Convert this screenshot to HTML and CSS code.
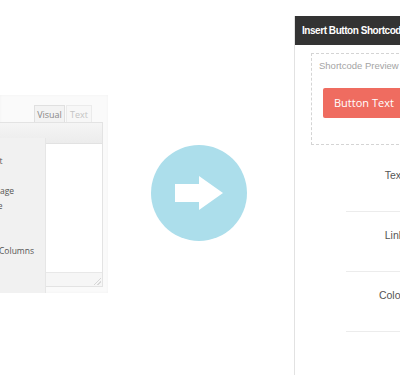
FILE: index.html
```html
<!DOCTYPE html>
<html lang="en">
<head>
    <meta charset="UTF-8">
    <meta name="viewport" content="width=device-width, initial-scale=1.0">
    <title>Button Shortcode</title>
    <link rel="stylesheet" href="styles.css">
</head>
<body>
    <div class="editor-wrap">
        <div class="tabs">
            <span class="tab active">Visual</span>
            <span class="tab">Text</span>
        </div>
        <div class="editor">
            <div class="toolbar"></div>
            <div class="content"></div>
            <div class="status"><span class="grip"></span></div>
        </div>
        <ul class="menu">
            <li>Tooltips Text</li>
            <li>&nbsp;</li>
            <li>Featured Image</li>
            <li>Pricing Table</li>
            <li>&nbsp;</li>
            <li>&nbsp;</li>
            <li>Responsive Columns</li>
        </ul>
    </div>

    <div class="arrow">
        <svg width="96" height="96" viewBox="0 0 96 96">
            <circle cx="48" cy="48" r="48" fill="#acdeeb"/>
            <rect x="24" y="39" width="25" height="18" fill="#fff"/>
            <polygon points="48,31 72,48 48,65" fill="#fff"/>
        </svg>
    </div>

    <div class="panel">
        <div class="panel-header">Insert Button Shortcode</div>
        <div class="panel-body">
            <div class="preview">
                <div class="preview-title">Shortcode Preview</div>
                <span class="btn-preview">Button Text</span>
            </div>
            <div class="fields">
                <div class="field"><label>Text</label></div>
                <div class="field"><label>Link</label></div>
                <div class="field"><label>Color</label></div>
            </div>
        </div>
    </div>
</body>
</html>
```

FILE: styles.css
```css
body {
    margin: 0;
    width: 400px;
    height: 375px;
    overflow: hidden;
    display: flex;
    align-items: flex-start;
    background: #fff;
    font-family: "Liberation Sans", Arial, sans-serif;
}

/* left: editor screenshot */
.editor-wrap {
    position: relative;
    flex-shrink: 0;
    width: 108px;
    height: 198px;
    margin-top: 95px;
    background: #fafafa;
    box-shadow: inset 0 0 3px rgba(0, 0, 0, 0.04);
    overflow: hidden;
}
.tabs {
    display: flex;
    gap: 1px;
    padding: 10px 0 0 34px;
    height: 17px;
}
.tab {
    width: 26px;
    height: 17px;
    line-height: 17px;
    text-align: center;
    font-family: "Open Sans", sans-serif;
    font-size: 9px;
    color: #c4c4c4;
    background: #f7f7f7;
    border: 1px solid #ebebeb;
    border-bottom: none;
    box-sizing: border-box;
}
.tab.active {
    width: 31px;
    color: #888;
    background: #f3f3f3;
    border-color: #e0e0e0;
}
.editor {
    display: flex;
    flex-direction: column;
    width: 104px;
    height: 165px;
    margin-left: -1px;
    border: 1px solid #e3e3e3;
    box-sizing: border-box;
    background: #fff;
}
.toolbar {
    height: 20px;
    background: linear-gradient(#f5f5f5, #ececec);
    border-bottom: 1px solid #e2e2e2;
}
.content {
    flex: 1;
    background: #fff;
}
.status {
    position: relative;
    height: 13px;
    background: #f6f6f6;
    border-top: 1px solid #e8e8e8;
}
.grip {
    position: absolute;
    right: 1px;
    bottom: 1px;
    width: 8px;
    height: 8px;
    background: linear-gradient(135deg, transparent 55%, #d8d8d8 55%, #d8d8d8 62%, transparent 62%, transparent 75%, #d8d8d8 75%, #d8d8d8 82%, transparent 82%);
}
.menu {
    position: absolute;
    left: 0;
    top: 43px;
    width: 46px;
    height: 155px;
    margin: 0;
    padding: 15px 0 0;
    list-style: none;
    background: #f1f1f1;
    border-right: 1px solid #e6e6e6;
    box-sizing: border-box;
    overflow: hidden;
}
.menu li {
    margin-left: -48px;
    height: 15px;
    line-height: 15px;
    white-space: nowrap;
    font-family: "Open Sans", sans-serif;
    font-size: 8.5px;
    color: #555;
}

/* middle arrow */
.arrow {
    flex-shrink: 0;
    width: 96px;
    height: 96px;
    margin: 145px 0 0 43px;
}
.arrow svg {
    display: block;
}

/* right: shortcode dialog */
.panel {
    flex-shrink: 0;
    width: 200px;
    height: 359px;
    margin: 16px 0 0 47px;
    border-left: 1px solid #e2e2e2;
    box-sizing: border-box;
}
.panel-header {
    height: 29px;
    line-height: 30px;
    padding-left: 7px;
    background: #333;
    color: #fff;
    font-size: 10px;
    font-weight: bold;
    letter-spacing: -0.45px;
    white-space: nowrap;
}
.panel-body {
    padding: 8px 0 0 16px;
}
.preview {
    height: 92px;
    border: 1px dashed #d4d4d4;
    box-sizing: border-box;
    padding: 6px 0 0 7px;
}
.preview-title {
    font-size: 9.5px;
    color: #a4a4a4;
    line-height: 12px;
}
.btn-preview {
    display: block;
    width: 100px;
    height: 30px;
    margin: 16px 0 0 4px;
    padding-left: 11px;
    line-height: 30px;
    background: #ef6c60;
    color: #fff;
    font-family: "Open Sans", sans-serif;
    font-size: 11px;
    border-radius: 2px;
}
.fields {
    margin: 7px 0 0 35px;
}
.field {
    height: 42px;
    padding-top: 17px;
    border-bottom: 1px solid #ececec;
}
.field label {
    display: block;
    width: 58px;
    text-align: right;
    font-size: 10.5px;
    line-height: 12px;
    color: #555;
}
```
